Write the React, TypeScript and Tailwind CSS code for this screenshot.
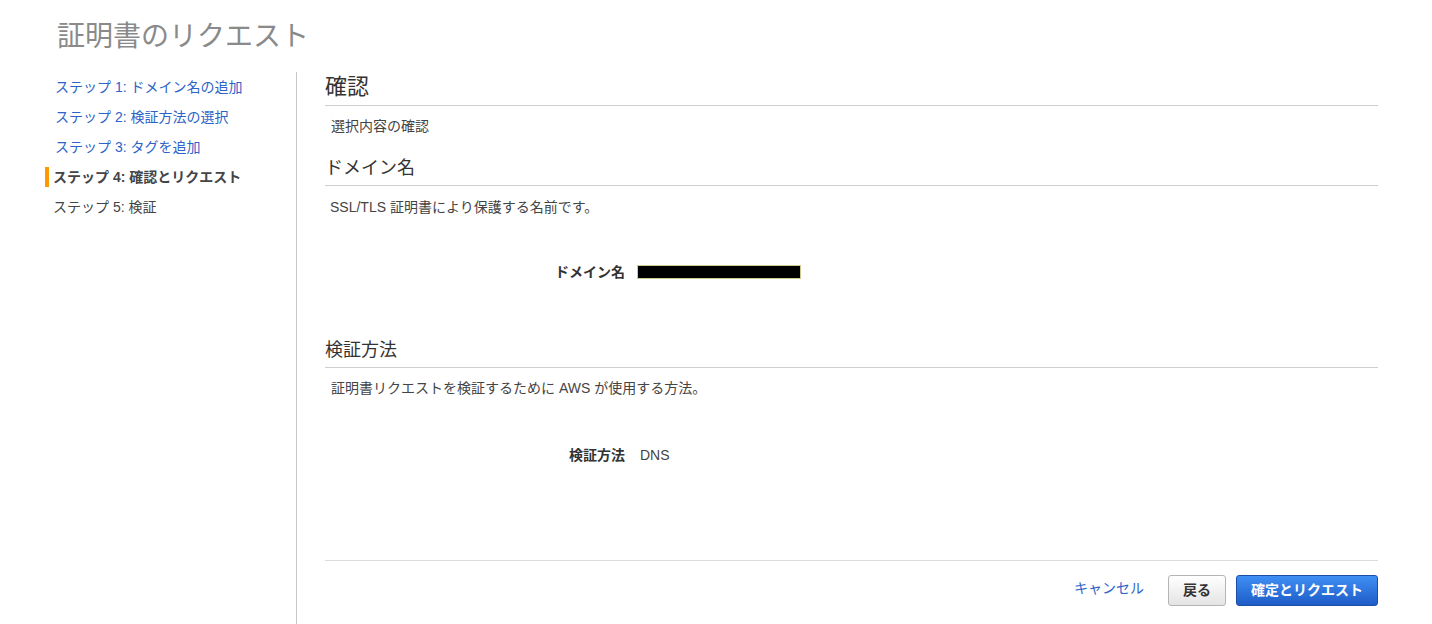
import React from 'react';

const steps = [
  { label: 'ステップ 1: ドメイン名の追加', state: 'done' },
  { label: 'ステップ 2: 検証方法の選択', state: 'done' },
  { label: 'ステップ 3: タグを追加', state: 'done' },
  { label: 'ステップ 4: 確認とリクエスト', state: 'active' },
  { label: 'ステップ 5: 検証', state: 'todo' },
];

const SectionHeader: React.FC<{ title: string; big?: boolean }> = ({ title, big }) => (
  <h2
    className={`border-b border-[#cfcfcf] text-[#333] font-normal ${
      big ? 'text-[22px] leading-[28px] pb-[4px]' : 'text-[18px] leading-[24px] pb-[5px]'
    }`}>
    {title}
  </h2>
);

const DetailRow: React.FC<{ label: string; children: React.ReactNode }> = ({ label, children }) => (
  <div className="flex items-center h-[20px]">
    <div className="w-[300px] text-right font-bold text-[14px] text-[#333]">{label}</div>
    {children}
  </div>
);

const App: React.FC = () => {
  return (
    <div
      className="min-h-screen flex flex-col bg-white text-[#444]"
      style={{ fontFamily: '"Liberation Sans", "Noto Sans CJK JP", sans-serif' }}>
      <h1 className="pl-[57px] pt-[19px] text-[28px] leading-[36px] font-normal text-[#8a8a8a]">
        証明書のリクエスト
      </h1>

      <div className="flex flex-1 mt-[17px]">
        {/* steps sidebar */}
        <div className="w-[297px] border-r border-[#c8c8c8] pl-[45px]">
          <ul>
            {steps.map((s) => (
              <li key={s.label} className="h-[30px] flex items-center text-[14px]">
                <span
                  className={`w-[4px] h-[20px] ${s.state === 'active' ? 'bg-[#ff9900]' : 'bg-transparent'}`}
                />
                <span
                  className={
                    s.state === 'active'
                      ? 'pl-[4px] font-bold text-[#444]'
                      : s.state === 'done'
                      ? 'pl-[6px] text-[#2d63c8]'
                      : 'pl-[4px] text-[#444]'
                  }>
                  {s.label}
                </span>
              </li>
            ))}
          </ul>
        </div>

        {/* review content */}
        <div className="ml-[28px] w-[1053px] pt-[1px] text-[14px]">
          <SectionHeader title="確認" big />
          <p className="mt-[10px] pl-[6px] leading-[20px]">選択内容の確認</p>

          <div className="mt-[20px]">
            <SectionHeader title="ドメイン名" />
          </div>
          <p className="mt-[11px] pl-[5px] leading-[20px]">SSL/TLS 証明書により保護する名前です。</p>

          <div className="mt-[45px]">
            <DetailRow label="ドメイン名">
              <div className="ml-[12px] w-[164px] h-[14px] bg-black border border-[#cfc98f]" />
            </DetailRow>
          </div>

          <div className="mt-[56px]">
            <SectionHeader title="検証方法" />
          </div>
          <p className="mt-[10px] pl-[6px] leading-[20px]">
            証明書リクエストを検証するために AWS が使用する方法。
          </p>

          <div className="mt-[47px]">
            <DetailRow label="検証方法">
              <span className="ml-[15px] text-[14px] text-[#444]">DNS</span>
            </DetailRow>
          </div>

          <div className="mt-[95px] border-t border-[#dcdcdc] pt-[14px] flex justify-end items-center">
            <button className="text-[14px] text-[#2d63c8] mr-[24px] -mt-[4px]">キャンセル</button>
            <button className="h-[31px] w-[58px] rounded-[3px] border border-[#b5b5b5] bg-gradient-to-b from-[#ffffff] to-[#e4e4e4] text-[14px] font-bold text-[#333] mr-[10px]">
              戻る
            </button>
            <button className="h-[31px] w-[142px] rounded-[3px] border border-[#1d4ea5] bg-gradient-to-b from-[#3f8ff5] to-[#1f5cc7] text-[14px] font-bold text-white">
              確定とリクエスト
            </button>
          </div>
        </div>
      </div>
    </div>
  );
};

export default App;
